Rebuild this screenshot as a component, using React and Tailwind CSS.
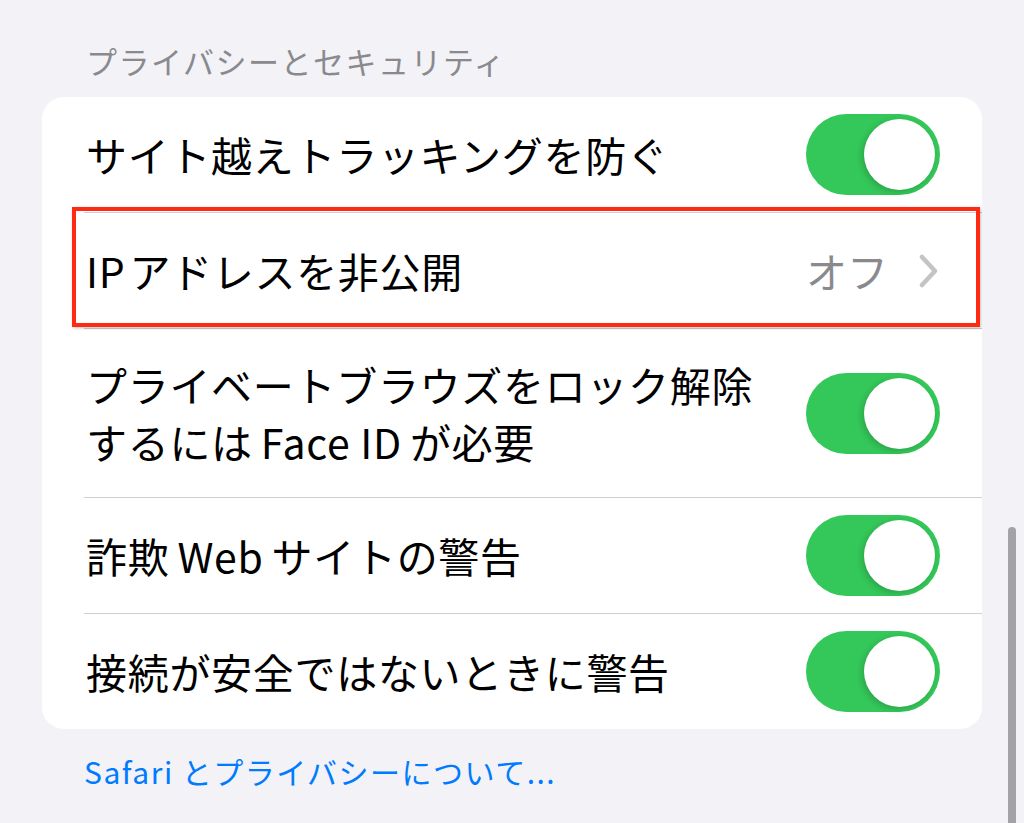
const FONT = { fontFamily: '"Noto Sans CJK JP", "Noto Sans", sans-serif' };

function Toggle() {
  return (
    <div className="flex h-[81px] w-[134px] shrink-0 items-center justify-end rounded-full bg-[#34c759] pr-[5px]">
      <div className="h-[71px] w-[71px] rounded-full bg-white shadow-[-2px_2px_6px_rgba(0,0,0,0.18)]" />
    </div>
  );
}

function Chevron() {
  return (
    <svg width="22" height="34" viewBox="0 0 22 34" className="shrink-0">
      <path d="M4 3 L17 17 L4 31" fill="none" stroke="#c4c4c7" strokeWidth="4.5" strokeLinecap="round" strokeLinejoin="round" />
    </svg>
  );
}

function Separator() {
  return <div className="ml-[42px] h-px bg-[#cfcfd3]" />;
}

// latin words sit a little apart from the kana around them
function Gap({ children }) {
  return <span className="mx-[8px]">{children}</span>;
}

function ToggleRow({ children, tall }) {
  return (
    <div className={`flex items-center justify-between pl-[44px] pr-[42px] ${tall ? 'h-[168px]' : 'h-[115px]'}`}>
      <div className="text-[41px] leading-[57px] tracking-[0.7px] text-black">{children}</div>
      <Toggle />
    </div>
  );
}

export default function App() {
  return (
    <div className="relative h-[823px] w-full overflow-hidden bg-[#f2f2f7]" style={FONT}>
      <div className="pl-[86px] pt-[41px] text-[31px] leading-[40px] tracking-[1.5px] text-[#8a8a8e]">
        プライバシーとセキュリティ
      </div>

      <div className="mx-[42px] mt-[16px] overflow-hidden rounded-[22px] bg-white">
        <ToggleRow>サイト越えトラッキングを防ぐ</ToggleRow>
        <Separator />

        <div className="relative flex h-[115px] items-center justify-between pl-[44px] pr-[42px]">
          <div className="text-[41px] leading-[57px] tracking-[0.7px] text-black">
            <span className="mr-[4px]">IP</span>アドレスを非公開
          </div>
          <div className="flex items-center gap-[30px]">
            <span className="text-[41px] leading-[57px] text-[#8a8a8e]">オフ</span>
            <Chevron />
          </div>
          <div className="pointer-events-none absolute bottom-[1px] left-[30px] right-[2px] top-[-6px] border-4 border-[#ff2a12] shadow-[1px_1px_3px_rgba(0,0,0,0.25)]" />
        </div>
        <Separator />

        <ToggleRow tall>
          プライベートブラウズをロック解除
          <br />
          するには<Gap>Face ID</Gap>が必要
        </ToggleRow>
        <Separator />

        <ToggleRow>
          詐欺<Gap>Web</Gap>サイトの警告
        </ToggleRow>
        <Separator />

        <ToggleRow>接続が安全ではないときに警告</ToggleRow>
      </div>

      <div className="pl-[84px] pt-[22px] text-[30px] leading-[40px] tracking-[1.5px] text-[#007aff]">
        Safari<span className="ml-[8px]">とプライバシーについて...</span>
      </div>

      <div className="absolute left-[1008px] top-[527px] h-[320px] w-[8px] rounded-full bg-[#a3a3a7]" />
    </div>
  );
}
